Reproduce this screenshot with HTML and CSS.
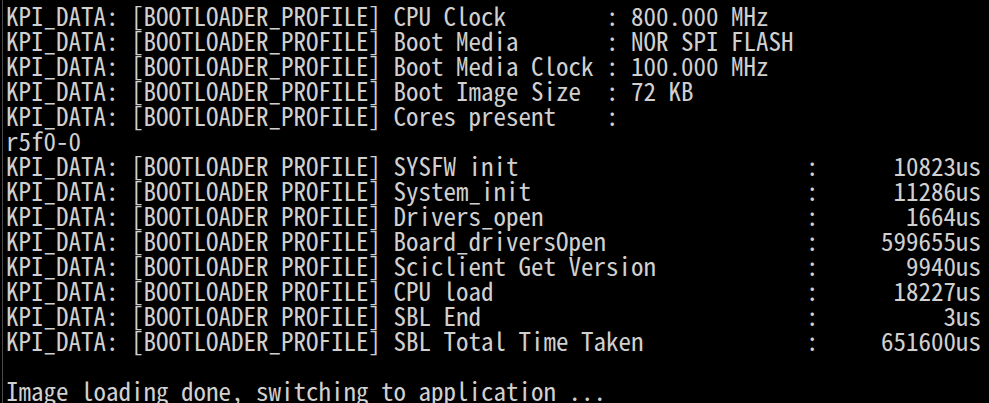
FILE: index.html
```html
<!DOCTYPE html>
<html lang="en">
<head>
<meta charset="utf-8">
<title>Console</title>
<link rel="stylesheet" href="styles.css">
</head>
<body>
<div class="terminal">
<pre class="console">KPI_DATA: [BOOTLOADER_PROFILE] CPU Clock        : 800.000 MHz
KPI_DATA: [BOOTLOADER_PROFILE] Boot Media       : NOR SPI FLASH
KPI_DATA: [BOOTLOADER_PROFILE] Boot Media Clock : 100.000 MHz
KPI_DATA: [BOOTLOADER_PROFILE] Boot Image Size  : 72 KB
KPI_DATA: [BOOTLOADER_PROFILE] Cores present    :
r5f0-0
KPI_DATA: [BOOTLOADER PROFILE] SYSFW init                       :      10823us
KPI_DATA: [BOOTLOADER PROFILE] System_init                      :      11286us
KPI_DATA: [BOOTLOADER PROFILE] Drivers_open                     :       1664us
KPI_DATA: [BOOTLOADER PROFILE] Board_driversOpen                :     599655us
KPI_DATA: [BOOTLOADER PROFILE] Sciclient Get Version            :       9940us
KPI_DATA: [BOOTLOADER PROFILE] CPU load                         :      18227us
KPI_DATA: [BOOTLOADER PROFILE] SBL End                          :          3us
KPI_DATA: [BOOTLOADER_PROFILE] SBL Total Time Taken             :     651600us

Image loading done, switching to application ...</pre>
</div>
</body>
</html>
```
FILE: styles.css
```css
html, body {
  margin: 0;
  padding: 0;
  background: #000;
  height: 100%;
  overflow: hidden;
}

.terminal {
  height: 100%;
  margin-left: 2px;
  border-left: 1px solid #4a4a4a;
}

.console {
  margin: 0;
  padding: 3px 0 0 3px;
  color: #d0d0d0;
  font-family: "Noto Sans Mono CJK JP", "Liberation Mono", monospace;
  font-size: 25px;
  line-height: 25px;
  white-space: pre;
}
```
